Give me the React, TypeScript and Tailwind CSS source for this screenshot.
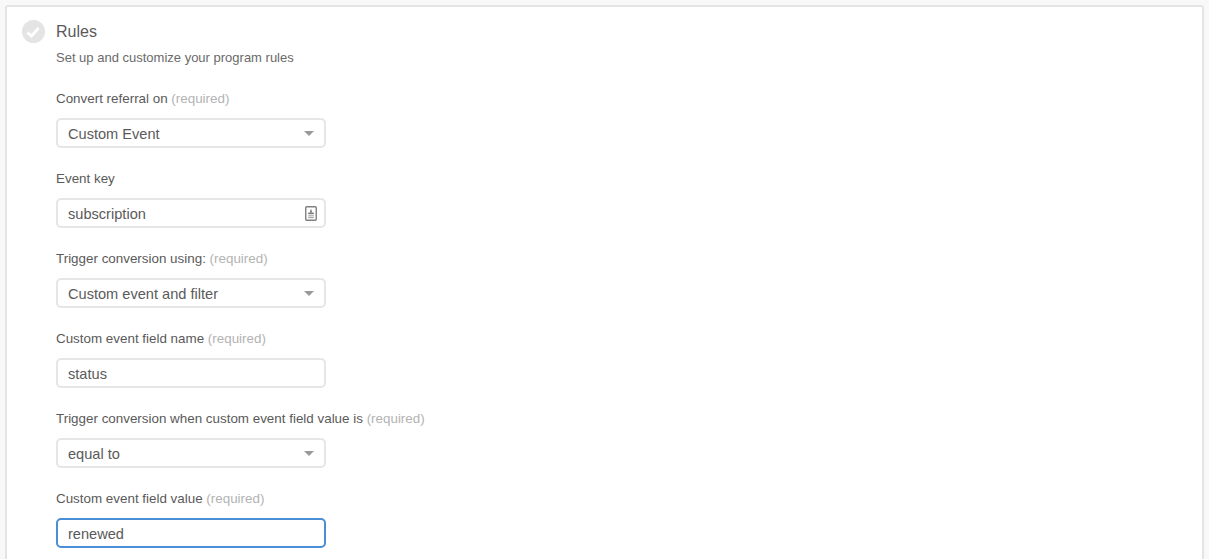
import React from 'react';

const Caret = () => (
  <span className="w-0 h-0 border-x-[5.5px] border-x-transparent border-t-[5px] border-t-[#9a9a9a]" />
);

const KeyIcon = () => (
  <svg className="-mr-[3px]" width="12" height="15" viewBox="0 0 12 15" fill="none">
    <rect x="0.75" y="0.75" width="10.5" height="13.5" rx="1" stroke="#808080" strokeWidth="1.4" />
    <path d="M6 2.6 L7.2 6.6 H4.8 Z" fill="#777" />
    <rect x="3.2" y="6.6" width="5.6" height="1.6" fill="#777" />
    <rect x="3.2" y="9.2" width="5.6" height="1.2" fill="#aaa" />
    <rect x="3.2" y="11" width="5.6" height="1.2" fill="#aaa" />
  </svg>
);

type FieldProps = {
  label: string;
  required?: boolean;
  value: string;
  right?: React.ReactNode;
  focused?: boolean;
};

const Field: React.FC<FieldProps> = ({ label, required, value, right, focused }) => (
  <div className="h-[80px]">
    <div className="h-[20px] leading-[20px] text-[13.4px] text-[#5a5a5a]">
      {label}
      {required && <span className="text-[#b3b3b3]"> (required)</span>}
    </div>
    <div
      className={`mt-[9px] w-[270px] h-[30px] flex items-center justify-between rounded-[5px] bg-white pl-[10px] pr-[10px] text-[14.6px] text-[#5a5a5a] border-2 ${
        focused ? 'border-[#4a8fd6]' : 'border-[#e6e6e6]'
      }`}
    >
      <span className="pt-[4px]">{value}</span>
      {right}
    </div>
  </div>
);

export default function App() {
  return (
    <div className="h-[559px] overflow-hidden bg-[#f8f8f8] pt-[5px] px-[5px] font-['Liberation_Sans',Arial,sans-serif]">
      <div className="h-[600px] rounded-t-[3px] border-2 border-[#e4e4e4] bg-white pt-[13px] pl-[15px]">
        <div className="flex">
          <div className="w-[23px] h-[23px] -ml-[0.5px] rounded-full bg-[#e4e4e4] flex items-center justify-center">
            <svg width="16" height="14" viewBox="0 0 16 14" fill="none">
              <path d="M2.5 7.5 L6.5 11 L13.5 3" stroke="#fff" strokeWidth="2.8" />
            </svg>
          </div>
          <div className="ml-[11.5px]">
            <div className="h-[24px] leading-[24px] text-[16px] text-[#5a5a5a]">Rules</div>
            <div className="mt-[4px] h-[20px] leading-[20px] text-[13px] text-[#6a6a6a]">
              Set up and customize your program rules
            </div>
          </div>
        </div>
        <div className="ml-[34px] mt-[21px]">
          <Field label="Convert referral on" required value="Custom Event" right={<Caret />} />
          <Field label="Event key" value="subscription" right={<KeyIcon />} />
          <Field label="Trigger conversion using:" required value="Custom event and filter" right={<Caret />} />
          <Field label="Custom event field name" required value="status" />
          <Field label="Trigger conversion when custom event field value is" required value="equal to" right={<Caret />} />
          <Field label="Custom event field value" required value="renewed" focused />
        </div>
      </div>
    </div>
  );
}
